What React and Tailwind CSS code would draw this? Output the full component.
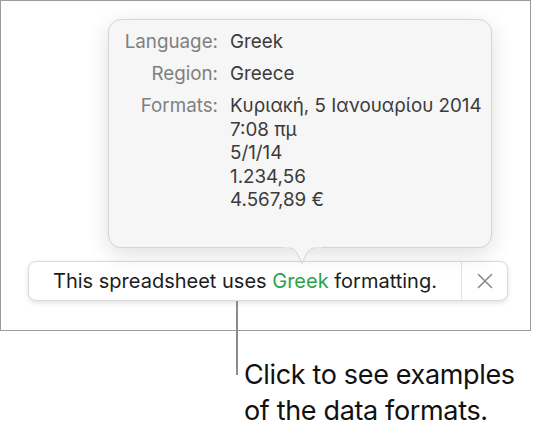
export default function App() {
  const font = { fontFamily: 'Inter, "Noto Sans", sans-serif' }
  return (
    <div className="w-[536px] h-[436px] bg-white overflow-hidden" style={font}>
      {/* screenshot frame */}
      <div className="w-[531px] h-[331px] border border-[#9c9c9c] bg-white flex flex-col">
        {/* popover */}
        <div className="relative ml-[107px] mt-[18px] w-[384px] h-[229px] rounded-[13px] bg-[#f6f6f6] border border-[#d4d4d4] shadow-[0_6px_22px_rgba(0,0,0,0.13)]">
          <div className="grid grid-cols-[109px_1fr] gap-x-[12px] gap-y-[8px] pt-[10px] text-[18.8px] leading-[24px]">
            <div className="text-right text-[#808080]">Language:</div>
            <div className="text-[#3b3b3b]">Greek</div>
            <div className="text-right text-[#808080]">Region:</div>
            <div className="text-[#3b3b3b]">Greece</div>
            <div className="text-right text-[#808080]">Formats:</div>
            <div className="text-[#3b3b3b] leading-[23.5px]">
              <div>Κυριακή, 5 Ιανουαρίου 2014</div>
              <div>7:08 πμ</div>
              <div>5/1/14</div>
              <div>1.234,56</div>
              <div>4.567,89 €</div>
            </div>
          </div>
          {/* arrow */}
          <svg className="absolute left-[173px] top-[226px]" width="40" height="20" viewBox="0 0 40 20">
            <path d="M0 1 C10 1 13 3 16 9 L20 17.5 L24 9 C27 3 30 1 40 1" fill="#f6f6f6" stroke="#d4d4d4" strokeWidth="1" />
            <rect x="0" y="0" width="40" height="1.5" fill="#f6f6f6" />
          </svg>
        </div>

        {/* banner */}
        <div className="ml-[27px] mt-[13px] w-[480px] h-[40px] flex items-stretch rounded-[8px] bg-white border border-[#dcdcdc] shadow-[0_2px_5px_rgba(0,0,0,0.12)]">
          <div className="flex-1 flex items-center justify-center text-[20px] text-[#1c1c1c]">
            <span>This spreadsheet uses <span className="text-[#2aa24d]">Greek</span> formatting.</span>
          </div>
          <div className="w-[46px] border-l border-[#e2e2e2] flex items-center justify-center">
            <svg width="16" height="16" viewBox="0 0 16 16">
              <path d="M1.5 1.5 L14.5 14.5 M14.5 1.5 L1.5 14.5" stroke="#8a8a8a" strokeWidth="1.6" strokeLinecap="round" />
            </svg>
          </div>
        </div>
      </div>

      {/* callout */}
      <div className="flex ml-[236px]">
        <div className="w-[2px] h-[74px] -mt-[30px] bg-[#8c8c8c] relative z-10" />
        <div className="ml-[6px] mt-[26px] text-[27px] leading-[36px] text-[#111] tracking-[-0.35px]">
          <div>Click to see examples</div>
          <div>of the data formats.</div>
        </div>
      </div>
    </div>
  )
}
